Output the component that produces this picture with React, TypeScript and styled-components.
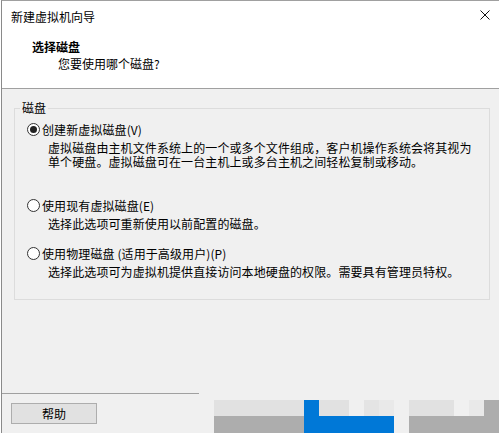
import styled, { createGlobalStyle } from 'styled-components';

const GlobalStyle = createGlobalStyle`
  html, body { margin: 0; padding: 0; background: #ffffff; }
  body {
    font-family: "Noto Sans CJK SC", "Noto Sans", sans-serif;
    font-size: 12px;
    color: #000;
  }
  * { box-sizing: border-box; }
`;

const Window = styled.div`
  width: 498px;
  height: 433px;
  margin-left: 1px;
  border-top: 1px solid #a0a0a0;
  border-left: 1px solid #8a8a8a;
  display: flex;
  flex-direction: column;
  background: #f0f0f0;
  overflow: hidden;
`;

const TitleBar = styled.div`
  height: 32px;
  flex: none;
  display: flex;
  justify-content: space-between;
  padding: 0 9px;
  background: #fff;
  line-height: 32px;
`;

const CloseIcon = styled.svg`
  margin-top: 9px;
  width: 10px;
  height: 10px;
`;

const Header = styled.div`
  flex: none;
  background: #fff;
  padding: 6px 0 16px 30px;
  border-bottom: 1px solid #a0a0a0;
`;

const Heading = styled.div`
  font-weight: bold;
  line-height: 16px;
`;

const SubHeading = styled.div`
  margin-top: 1px;
  padding-left: 26px;
  line-height: 16px;
`;

const Body = styled.div`
  flex: 1;
  padding: 0 9px 0 12px;
  letter-spacing: 0.1px;
`;

const GroupBox = styled.fieldset`
  margin: 12px 0 0;
  padding: 0 5px;
  height: 199px;
  border: 1px solid #dcdcdc;
`;

const Legend = styled.legend`
  padding: 0 2px;
  line-height: 14px;
`;

const OptionRow = styled.label<{ $gap: number }>`
  display: flex;
  align-items: center;
  height: 16px;
  margin-top: ${p => p.$gap}px;
`;

const Radio = styled.span<{ $checked?: boolean }>`
  position: relative;
  width: 13px;
  height: 13px;
  margin-left: 7px;
  margin-right: 2px;
  border: 1px solid #333;
  border-radius: 50%;
  background: #fff;
  &::after {
    content: '';
    display: ${p => (p.$checked ? 'block' : 'none')};
    position: absolute;
    left: 2px;
    top: 2px;
    width: 7px;
    height: 7px;
    border-radius: 50%;
    background: #222;
  }
`;

const Description = styled.div`
  margin-top: 4px;
  padding-left: 28px;
  line-height: 14px;
`;

const Footer = styled.div`
  flex: none;
  height: 40px;
  display: flex;
`;

const FooterLeft = styled.div`
  width: 197px;
  border-top: 1px solid #a0a0a0;
`;

const Button = styled.button`
  margin: 9px 0 0 9px;
  width: 86px;
  height: 21px;
  padding: 0;
  border: 1px solid #adadad;
  background: #e1e1e1;
  font: inherit;
  color: #000;
  line-height: 19px;
`;

const Mosaic = styled.div`
  margin-left: auto;
  align-self: flex-end;
  display: grid;
  grid-template-columns: repeat(19, 15px);
  grid-template-rows: 16px 17px;
`;

const Tile = styled.div<{ $c: string }>`
  background: ${p => p.$c};
`;

const B = '#0078d7';
const mosaicRows: string[][] = [
  [
    '#e1e1e1', '#e1e1e1', '#e1e1e1', '#e1e1e1', '#e1e1e1', '#e1e1e1',
    B, '#e1e1e1', '#e1e1e1', '#f0f0f0', '#e4e4e4', '#e9e9e9', '#f0f0f0',
    '#e1e1e1', '#e1e1e1', '#e1e1e1', '#f0f0f0', '#e9e9e9', '#adadad',
  ],
  [
    '#adadad', '#adadad', '#adadad', '#adadad', '#adadad', '#adadad',
    B, B, B, B, B, B, '#f0f0f0',
    '#adadad', '#adadad', '#adadad', '#adadad', '#adadad', '#adadad',
  ],
];

const options = [
  {
    label: '创建新虚拟磁盘(V)',
    checked: true,
    gap: 6,
    desc: ['虚拟磁盘由主机文件系统上的一个或多个文件组成，客户机操作系统会将其视为', '单个硬盘。虚拟磁盘可在一台主机上或多台主机之间轻松复制或移动。'],
  },
  {
    label: '使用现有虚拟磁盘(E)',
    gap: 28,
    desc: ['选择此选项可重新使用以前配置的磁盘。'],
  },
  {
    label: '使用物理磁盘 (适用于高级用户)(P)',
    gap: 14,
    desc: ['选择此选项可为虚拟机提供直接访问本地硬盘的权限。需要具有管理员特权。'],
  },
];

export default function App() {
  return (
    <>
      <GlobalStyle />
      <Window>
        <TitleBar>
          <span>新建虚拟机向导</span>
          <CloseIcon viewBox="0 0 10 10">
            <path d="M0.5 0.5 L9.5 9.5 M9.5 0.5 L0.5 9.5" stroke="#111" strokeWidth="1" fill="none" />
          </CloseIcon>
        </TitleBar>
        <Header>
          <Heading>选择磁盘</Heading>
          <SubHeading>您要使用哪个磁盘?</SubHeading>
        </Header>
        <Body>
          <GroupBox>
            <Legend>磁盘</Legend>
            {options.map(opt => (
              <div key={opt.label}>
                <OptionRow $gap={opt.gap}>
                  <Radio $checked={opt.checked} />
                  <span>{opt.label}</span>
                </OptionRow>
                <Description>
                  {opt.desc.map(line => (
                    <div key={line}>{line}</div>
                  ))}
                </Description>
              </div>
            ))}
          </GroupBox>
        </Body>
        <Footer>
          <FooterLeft>
            <Button>帮助</Button>
          </FooterLeft>
          <Mosaic>
            {mosaicRows.flatMap((row, r) =>
              row.map((c, i) => <Tile key={`${r}-${i}`} $c={c} />)
            )}
          </Mosaic>
        </Footer>
      </Window>
    </>
  );
}
